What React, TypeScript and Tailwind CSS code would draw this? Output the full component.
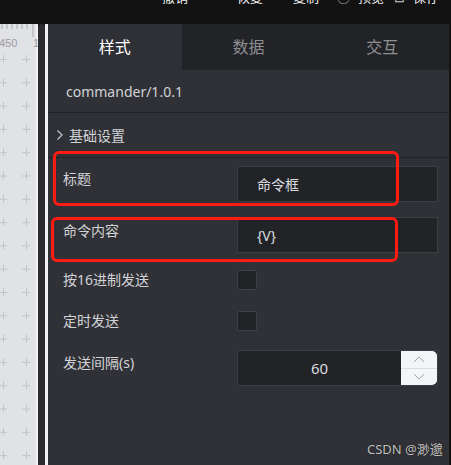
import React from 'react'

const FONT = { fontFamily: '"Noto Sans", "Noto Sans CJK SC", sans-serif' }

const TABS = ['样式', '数据', '交互']

function Ruler() {
  const ys = Array.from({ length: 20 }, (_, i) => 35 + i * 23.3)
  return (
    <svg width="38" height="441" className="block">
      <rect width="38" height="441" fill="#e1e2e5" />
      <rect x="36" width="2" height="441" fill="#f2f2f3" />
      {[2, 7, 12, 17, 22, 27].map((x) => (
        <line key={x} x1={x} y1="0" x2={x} y2="5" stroke="#a9abb0" strokeWidth="1" />
      ))}
      <line x1="33" y1="0" x2="33" y2="13" stroke="#a9abb0" strokeWidth="1" />
      <text x="-1" y="23" fontSize="11" fill="#9a9ca1" fontFamily="Liberation Sans, sans-serif">450</text>
      <text x="33" y="23" fontSize="11" fill="#9a9ca1" fontFamily="Liberation Sans, sans-serif">15</text>
      {ys.map((y) =>
        [3, 26].map((x) => (
          <g key={`${x}-${y}`} stroke="#c2c4c8" strokeWidth="1">
            <line x1={x - 4} y1={y + 0.5} x2={x + 4} y2={y + 0.5} />
            <line x1={x + 0.5} y1={y - 4} x2={x + 0.5} y2={y + 4} />
          </g>
        )),
      )}
    </svg>
  )
}

function TopBar() {
  // toolbar is scrolled up: only the bottom edge of its labels shows
  const items = [
    { x: 'ml-[143px]', icon: '↶', label: '撤销' },
    { x: 'ml-[30px]', icon: '↷', label: '恢复' },
    { x: 'ml-[30px]', icon: '', label: '复制' },
    { x: 'ml-[18px]', icon: '◯', label: '预览' },
    { x: 'ml-[10px]', icon: '⊟', label: '保存' },
  ]
  return (
    <div className="h-[24px] bg-[#121212] overflow-hidden flex items-start">
      {items.map((it) => (
        <div key={it.label} className={`${it.x} -mt-[11px] h-[16px] flex items-center gap-2 text-[13px] leading-[16px] text-[#f0f0f0]`}>
          {it.icon && <span className="text-[#ccc]">{it.icon}</span>}
          <span>{it.label}</span>
        </div>
      ))}
    </div>
  )
}

function Row({ label, children, labelMt }: { label: string; children: React.ReactNode; labelMt: string }) {
  return (
    <div className="flex items-start">
      <div className={`w-[189px] pl-[15px] text-[14px] leading-[20px] text-[#d2d3d6] ${labelMt}`}>{label}</div>
      {children}
    </div>
  )
}

function TextInput({ value }: { value: string }) {
  return (
    <div className="w-[201px] h-[36px] bg-[#222326] border border-[#3d3e42] flex items-center pl-[19px] text-[14px] text-[#dcdde0]">
      {value}
    </div>
  )
}

function Check() {
  return <div className="w-[20px] h-[20px] bg-[#222326] border border-[#3f4044] rounded-[2px]" />
}

export default function App() {
  return (
    <div className="relative w-[451px] h-[465px] bg-[#121212] overflow-hidden" style={FONT}>
      <TopBar />
      <div className="flex h-[441px]">
        <Ruler />
        <div className="w-[7px] bg-[#2b2c30] rounded-t-[4px]" />
        <div className="w-[3px] bg-[#f4f4f4]" />
        <div className="w-[401px] bg-[#303136] flex flex-col">
          {/* tabs */}
          <div className="flex h-[46px]">
            {TABS.map((t, i) => (
              <div
                key={t}
                className={`flex-1 flex items-center justify-center text-[16px] ${
                  i === 0 ? 'bg-[#2f3035] text-white' : 'bg-[#222326] text-[#8e8f93]'
                }`}
              >
                {t}
              </div>
            ))}
          </div>
          <div className="h-[43px] flex items-center pl-[18px] text-[14px] text-[#d2d3d6] border-b border-[#232428]">
            commander/1.0.1
          </div>
          <div className="h-[45px] flex items-center pl-[8px] text-[14px] text-[#d2d3d6] border-b border-[#232428]">
            <svg width="8" height="12" viewBox="0 0 8 12" className="mr-[5px]">
              <path d="M1.5 1.5 L6 6 L1.5 10.5" fill="none" stroke="#c8c9cc" strokeWidth="1.2" />
            </svg>
            基础设置
          </div>
          <div className="flex flex-col pt-[8px]">
            <Row label="标题" labelMt="mt-[3px]">
              <TextInput value="命令框" />
            </Row>
            <div className="h-[15px]" />
            <Row label="命令内容" labelMt="mt-[4px]">
              <TextInput value="{V}" />
            </Row>
            <div className="h-[17px]" />
            <Row label="按16进制发送" labelMt="mt-[0px]">
              <Check />
            </Row>
            <div className="h-[21px]" />
            <Row label="定时发送" labelMt="mt-[0px]">
              <Check />
            </Row>
            <div className="h-[19px]" />
            <Row label="发送间隔(s)" labelMt="mt-[3px]">
              <div className="w-[201px] h-[36px] bg-[#222326] border border-[#3d3e42] flex">
                <div className="flex-1 flex items-center justify-center text-[15px] text-[#dcdde0]">60</div>
                <div className="w-[36px] bg-[#f4f5f9] rounded-r-[5px] flex flex-col">
                  <div className="flex-1 flex items-center justify-center border-b border-[#dcdde3]">
                    <svg width="12" height="7" viewBox="0 0 12 7">
                      <path d="M1 6 L6 1 L11 6" fill="none" stroke="#9da2ad" strokeWidth="1" />
                    </svg>
                  </div>
                  <div className="flex-1 flex items-center justify-center">
                    <svg width="12" height="7" viewBox="0 0 12 7">
                      <path d="M1 1 L6 6 L11 1" fill="none" stroke="#9da2ad" strokeWidth="1" />
                    </svg>
                  </div>
                </div>
              </div>
            </Row>
          </div>
        </div>
        <div className="w-[2px] bg-[#121212]" />
      </div>

      {/* annotation boxes */}
      <div className="absolute left-[53px] top-[151px] w-[346px] h-[55px] border-[3px] border-[#ff1a12] rounded-[6px]" />
      <div className="absolute left-[51px] top-[217px] w-[347px] h-[45px] border-[3px] border-[#ff1a12] rounded-[6px]" />

      {/* watermark */}
      <div className="absolute left-[367px] top-[440px] text-[13px] leading-[18px] text-[#c4c4c4] [text-shadow:0_0_1px_#000]">
        CSDN @渺邈
      </div>
    </div>
  )
}
